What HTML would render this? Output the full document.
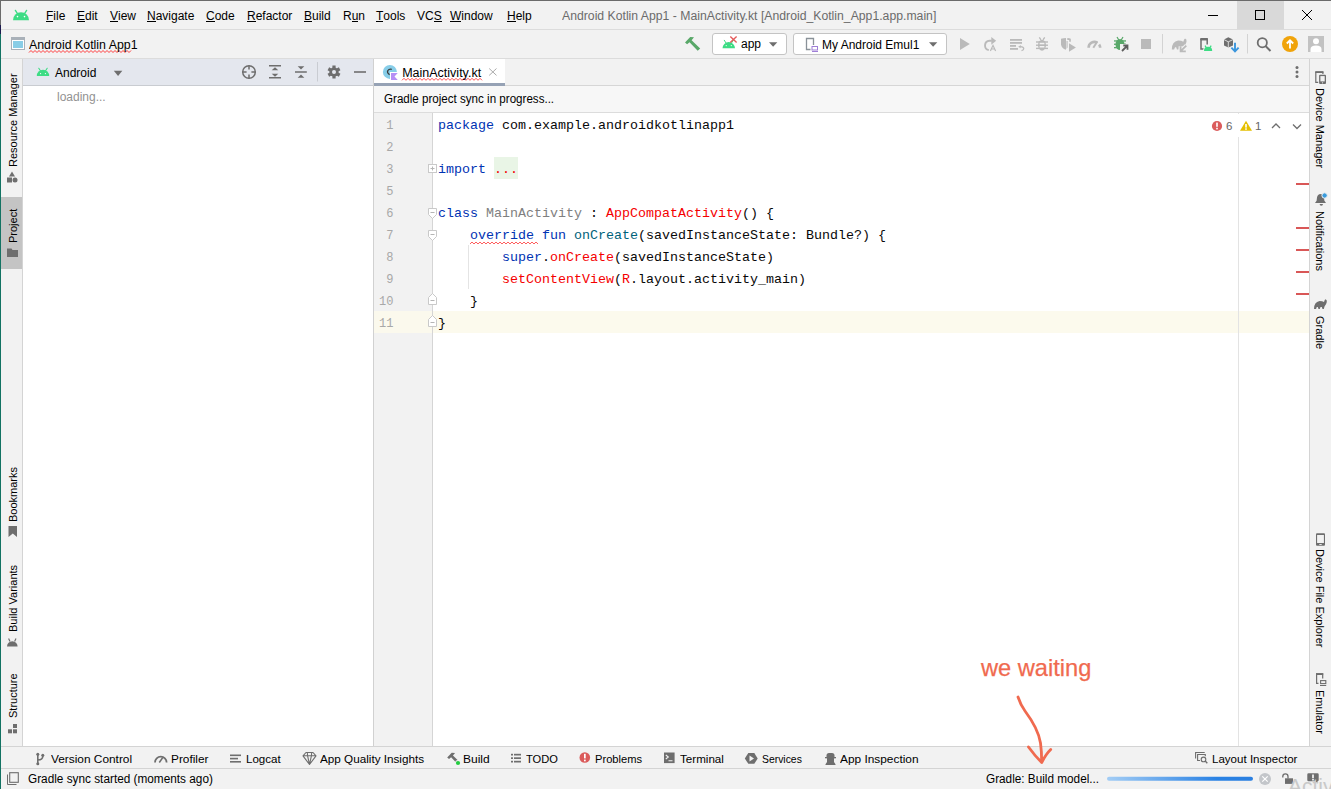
<!DOCTYPE html>
<html><head><meta charset="utf-8">
<style>
*{margin:0;padding:0;box-sizing:border-box}
html,body{width:1331px;height:789px;overflow:hidden;background:#f2f2f2;font-family:"Liberation Sans",sans-serif;font-size:12px;color:#000}
.a{position:absolute}
.t{position:absolute;white-space:nowrap;line-height:1}
.mono{font-family:"Liberation Mono",monospace}
.u{text-decoration:underline;text-underline-offset:2px}
svg{position:absolute;overflow:visible}
.mn{position:relative}.mn::after{content:"";position:absolute;left:0;right:0;top:12px;height:1px;background:#000}
.k{color:#0033b3}.r{color:#f50000}.g{color:#808080}.f{color:#00627a}
.vl{position:absolute;white-space:nowrap;line-height:1;transform-origin:0 0}
</style></head><body>
<!-- window border -->
<div class="a" style="left:0;top:0;width:1331px;height:1px;background:#6b6b6b"></div>
<div class="a" style="left:0;top:0;width:1px;height:25px;background:#6b6b6b"></div>
<div class="a" style="left:0;top:25px;width:1px;height:9px;background:#1c1a4e"></div>
<div class="a" style="left:0;top:34px;width:1px;height:755px;background:#137363"></div>

<!-- TITLE BAR -->
<div id="title" class="a" style="left:1px;top:1px;width:1330px;height:28px;background:#f2f2f2"></div>
<svg style="left:0;top:0" width="40" height="30"><path d="M13 20.2A8 8 0 0 1 29 20.2Z" fill="#3ddc84"/><path d="M15.4 10.4L17.6 13.8M26.6 10.4L24.4 13.8" stroke="#3ddc84" stroke-width="1.4" stroke-linecap="round"/><circle cx="17.5" cy="16.6" r="0.8" fill="#fff"/><circle cx="24.5" cy="16.6" r="0.8" fill="#fff"/></svg>
<div class="t" style="left:46px;top:10px"><span class="mn">F</span>ile</div>
<div class="t" style="left:77px;top:10px"><span class="mn">E</span>dit</div>
<div class="t" style="left:110px;top:10px"><span class="mn">V</span>iew</div>
<div class="t" style="left:147px;top:10px"><span class="mn">N</span>avigate</div>
<div class="t" style="left:206px;top:10px"><span class="mn">C</span>ode</div>
<div class="t" style="left:247px;top:10px"><span class="mn">R</span>efactor</div>
<div class="t" style="left:304px;top:10px"><span class="mn">B</span>uild</div>
<div class="t" style="left:343px;top:10px">R<span class="mn">u</span>n</div>
<div class="t" style="left:376px;top:10px"><span class="mn">T</span>ools</div>
<div class="t" style="left:417px;top:10px">VC<span class="mn">S</span></div>
<div class="t" style="left:450px;top:10px"><span class="mn">W</span>indow</div>
<div class="t" style="left:507px;top:10px"><span class="mn">H</span>elp</div>
<div class="t" style="left:562px;top:10px;color:#6b6b6b;transform:scaleX(1.019);transform-origin:0 0">Android Kotlin App1 - MainActivity.kt [Android_Kotlin_App1.app.main]</div>
<div class="a" style="left:1237px;top:1px;width:47px;height:28px;background:#d9d9d9"></div>
<svg style="left:0;top:0" width="1331" height="30"><path d="M1208 15.5H1218" stroke="#000" stroke-width="1"/><rect x="1255.5" y="10.5" width="9" height="9" fill="none" stroke="#000" stroke-width="1"/><path d="M1302 10L1312 20M1312 10L1302 20" stroke="#000" stroke-width="1"/></svg>
<div class="a" style="left:1px;top:29px;width:1330px;height:1px;background:#dcdcdc"></div>

<!-- NAVBAR -->
<svg style="left:0;top:30px" width="200" height="28"><rect x="11" y="7" width="14" height="13" fill="#a9b1b9"/><rect x="12" y="10" width="12" height="9" fill="#fff"/><rect x="13" y="11" width="10" height="7" fill="#89cde6"/>
<path d="M29 22.5l2-2 2 2 2-2 2 2 2-2 2 2 2-2 2 2 2-2 2 2 2-2 2 2 2-2 2 2 2-2 2 2 2-2 2 2 2-2 2 2 2-2 2 2 2-2 2 2 2-2 2 2 2-2 2 2 2-2 2 2 2-2 2 2 2-2 2 2 2-2 2 2 2-2 2 2 2-2 2 2 2-2 2 2 2-2 2 2 2-2 2 2 2-2 2 2 2-2 2 2 2-2" fill="none" stroke="#ff3b3b" stroke-width="1"/></svg>
<div class="t" style="left:29px;top:39px;transform:scaleX(1.03);transform-origin:0 0">Android Kotlin App1</div>
<svg style="left:0;top:0" width="1331" height="58">
<path d="M690.2 37L694 37.2L691.6 40.2L700.2 48.4L697.7 50.8L689.5 42.2L687.1 44.2L685 42.4Z" fill="#59a869"/>
</svg>
<div class="a" style="left:712px;top:33px;width:75px;height:22px;border:1px solid #c4c4c4;border-radius:3px;background:#fff"></div>
<svg style="left:0;top:0" width="1331" height="58">
<path d="M722.5 48.3A6.2 6.2 0 0 1 735 48.3Z" fill="#3ddc84"/><path d="M724.3 40.3L726 43M733.2 40.3L731.5 43" stroke="#3ddc84" stroke-width="1" stroke-linecap="round"/>
<circle cx="726.2" cy="45.6" r="0.6" fill="#fff"/><circle cx="731.3" cy="45.6" r="0.6" fill="#fff"/>
<path d="M730.3 36.6L736.6 42.6M736.6 36.6L730.3 42.6" stroke="#e55b5b" stroke-width="1.4"/>
<path d="M769 42.3H777.3L773.15 46.8Z" fill="#6e6e6e"/>
</svg>
<div class="t" style="left:741px;top:38px">app</div>
<div class="a" style="left:793px;top:33px;width:154px;height:22px;border:1px solid #c4c4c4;border-radius:3px;background:#fff"></div>
<svg style="left:0;top:0" width="1331" height="58">
<path d="M810.5 49.5H806.5V38.5H813.5V45" fill="none" stroke="#8a9299" stroke-width="1.3"/>
<rect x="812" y="46.5" width="5.5" height="3.5" fill="none" stroke="#9f7fd6" stroke-width="1"/><path d="M812 51.5H818" stroke="#9f7fd6" stroke-width="1"/>
<path d="M929 42.3H937.3L933.15 46.8Z" fill="#6e6e6e"/>
</svg>
<div class="t" style="left:822px;top:39px">My Android Emul1</div>
<svg style="left:0;top:0" width="1331" height="58">
<g fill="#bababa" stroke="none">
<path d="M960 38L969.8 44L960 50Z"/>
</g>
<path d="M991.8 40.8H989.5A4.7 4.7 0 0 0 988.8 50.1" fill="none" stroke="#bababa" stroke-width="1.9"/>
<path d="M991.3 37L996.2 40.8L991.3 44.7Z" fill="#bababa"/>
<path d="M990.4 50.9L993 45.3L995.6 50.9M991.4 49H994.6" fill="none" stroke="#bababa" stroke-width="1.2"/>
<g fill="#bababa"><rect x="1010" y="39" width="12" height="1.8"/><rect x="1010" y="42" width="12" height="1.8"/><rect x="1010" y="45" width="6" height="1.8"/><rect x="1010" y="48" width="8" height="1.8"/></g>
<path d="M1019.8 46.6Q1023.5 46.3 1023.8 48.6Q1023.8 50.3 1021.5 50.6" fill="none" stroke="#bababa" stroke-width="1.2"/><path d="M1018.2 46.7L1020.8 45L1020.6 48.2Z" fill="#bababa"/>
<g fill="#bababa"><ellipse cx="1042" cy="45.2" rx="4" ry="5.5"/><rect x="1036" y="41.3" width="12" height="1.4"/><rect x="1036" y="44.5" width="12" height="1.4"/><rect x="1036" y="47.7" width="12" height="1.4"/></g>
<path d="M1039.3 37.3L1041 39.8M1044.7 37.3L1043 39.8" stroke="#bababa" stroke-width="1.3"/>
<rect x="1039.6" y="42.8" width="4.8" height="1.5" fill="#f2f2f2"/><rect x="1039.6" y="46" width="4.8" height="1.5" fill="#f2f2f2"/>
<path d="M1061 38.8Q1063.5 38 1066 38V49.8Q1061.5 48.5 1061 44.5Z" fill="#bababa"/>
<path d="M1067.3 38.1Q1069.5 38.2 1070.8 38.8V41.7H1069.2V40H1067.3Z" fill="#bababa"/>
<path d="M1066.8 48.5Q1067.8 48 1067.6 46.5V41H1066.5V49Z" fill="#bababa"/>
<path d="M1069 43.2L1075.9 47.45L1069 51.7Z" fill="#bababa"/>
<path d="M1088.6 47.7A5.8 5.8 0 0 1 1097.3 42.7M1099.15 44.4A5.8 5.8 0 0 1 1100.2 47.7" fill="none" stroke="#bababa" stroke-width="2.6"/>
<path d="M1093.3 47.7L1097.3 41.5" stroke="#bababa" stroke-width="2"/>
<g fill="#59a869"><ellipse cx="1120" cy="44.5" rx="4.5" ry="5.6"/><rect x="1114" y="40.3" width="12" height="1.3"/><rect x="1114" y="43.6" width="12" height="1.3"/><rect x="1114" y="47" width="12" height="1.3"/></g>
<path d="M1117 37L1118.8 40M1123 37L1121.2 40" stroke="#59a869" stroke-width="1.2"/>
<path d="M1120 44H1130V53H1120Z" fill="#f2f2f2"/>
<path d="M1122 51L1127 46M1123.3 45.5H1127.5V49.7" fill="none" stroke="#5e5e5e" stroke-width="1.8"/>
<rect x="1141" y="39" width="10" height="10" fill="#bababa"/>
<rect x="1162" y="34" width="1" height="19.5" fill="#d3d3d3"/>
<g transform="translate(1171.8 49.4) scale(1.15 1.1) translate(-1314 -309)"><path d="M1314 309Q1314 302 1319.5 301Q1322.5 301 1324 302Q1324.7 299.5 1325.5 299.2Q1327.2 299.8 1326.8 302Q1326.3 304.5 1324.5 306.5L1323.8 309H1322.5L1321.8 307H1320.5L1319.8 309H1318.5L1317.8 307H1316.8L1316 309Z" fill="#bababa"/></g>
<path d="M1186.3 45.6L1181.2 50.7M1180.6 46.2V51.4H1185.8" fill="none" stroke="#f2f2f2" stroke-width="4"/>
<path d="M1186.3 45.6L1181.2 50.7M1180.6 46.2V51.4H1185.8" fill="none" stroke="#bababa" stroke-width="1.8"/>
<path d="M1203.6 49H1201V39.5H1207.2V44.5" fill="none" stroke="#6e6e6e" stroke-width="1.5"/><rect x="1200.2" y="38" width="7.8" height="2.2" rx="0.8" fill="#6e6e6e"/>
<path d="M1203.2 51.9V50.9A4.9 4.9 0 0 1 1213 50.9V51.9Z" fill="#f2f2f2"/>
<path d="M1204 50.9A4.1 4.1 0 0 1 1212.2 50.9Z" fill="#3ddc84"/><path d="M1205 45.6L1206.3 47.6M1211.2 45.6L1209.9 47.6" stroke="#3ddc84" stroke-width="1.2"/>
<path d="M1228.3 37.3L1233 39.6V45.4L1228.3 47.6L1224 45.4V39.6Z" fill="#6e6e6e"/>
<path d="M1224 39.6L1228.3 41.8L1233 39.6M1228.3 41.8V47.6" fill="none" stroke="#f2f2f2" stroke-width="0.8"/>
<path d="M1235 42.8V50.5M1231.4 47.6L1235 51.4L1238.6 47.6" fill="none" stroke="#3a96dd" stroke-width="1.9"/>
<rect x="1247" y="34" width="1" height="19.5" fill="#d3d3d3"/>
<circle cx="1262.3" cy="42.7" r="4.6" fill="none" stroke="#6e6e6e" stroke-width="1.8"/>
<path d="M1265.5 46L1270.5 51" stroke="#6e6e6e" stroke-width="2"/>
<circle cx="1290" cy="44" r="8" fill="#f0a30a"/>
<path d="M1290 48.5V40.5M1286.8 43.5L1290 40.3L1293.2 43.5" fill="none" stroke="#fff" stroke-width="1.8"/>
<rect x="1308" y="36" width="16" height="16" fill="#c2c2c2"/>
<circle cx="1316" cy="41.3" r="3" fill="#fff"/><path d="M1310.5 52V49Q1310.5 45.5 1316 45.5Q1321.5 45.5 1321.5 49V52Z" fill="#fff"/>
</svg>
<div class="a" style="left:1px;top:58px;width:1330px;height:1px;background:#dcdcdc"></div>

<!-- LEFT STRIP -->
<div class="a" style="left:1px;top:197px;width:21px;height:72px;background:#c4c4c4"></div>
<div class="vl" style="left:7.5px;top:167px;font-size:11px;transform:rotate(-90deg)">Resource Manager</div>
<div class="vl" style="left:7.5px;top:242.5px;font-size:11px;transform:rotate(-90deg)">Project</div>
<div class="vl" style="left:7.5px;top:522px;font-size:11px;transform:rotate(-90deg)">Bookmarks</div>
<div class="vl" style="left:7.5px;top:632px;font-size:11px;transform:rotate(-90deg)">Build Variants</div>
<div class="vl" style="left:7.5px;top:718px;font-size:11px;transform:rotate(-90deg)">Structure</div>
<svg style="left:0;top:0" width="23" height="789">
<g fill="#6e6e6e">
<path d="M12 171.5L15 176.5H9Z"/><rect x="7" y="177.5" width="5" height="5"/><circle cx="15" cy="180" r="2.5"/>
<path d="M7 248.5H11.5L12.5 250H18V257H7Z"/>
<path d="M8.5 526H17V537L12.8 533.5L8.5 537Z"/>
<path d="M7 646.5A5.3 5.3 0 0 1 17.6 646.5Z"/><path d="M8.6 638.6L10 641.5M16 638.6L14.6 641.5" stroke="#6e6e6e" stroke-width="1.2"/>
<rect x="13" y="724" width="4" height="4"/><rect x="8" y="729.3" width="4" height="4"/><rect x="13" y="729.3" width="4" height="4"/>
</g>
</svg>
<div class="a" style="left:22px;top:59px;width:1px;height:687px;background:#d4d4d4"></div>

<!-- PROJECT PANEL -->
<div class="a" style="left:23px;top:59px;width:350px;height:26px;background:#e4e7ee"></div>
<div class="a" style="left:23px;top:85px;width:350px;height:1px;background:#c9ccd1"></div>
<div class="a" style="left:23px;top:86px;width:350px;height:660px;background:#fff"></div>
<svg style="left:0;top:58px" width="373" height="28">
<path d="M36.8 18A6.2 6.2 0 0 1 49.2 18Z" fill="#3ddc84"/><path d="M38.8 10.3L40.6 13M47.2 10.3L45.4 13" stroke="#3ddc84" stroke-width="1.1" stroke-linecap="round"/>
<circle cx="40.6" cy="15.6" r="0.6" fill="#fff"/><circle cx="45.4" cy="15.6" r="0.6" fill="#fff"/>
<path d="M113.8 12.8H122.3L118.05 17.9Z" fill="#6e6e6e"/>
<g fill="none" stroke="#6e6e6e" stroke-width="1.5">
<circle cx="249" cy="14" r="6.3"/>
<path d="M242.5 14H246.6M251.4 14H255.5M249 7.5V11.6M249 16.4V20.5"/>
<path d="M269 7.8H281M269 19.8H281"/>
<path d="M295 14H306.8"/>
</g>
<g fill="#6e6e6e">
<path d="M271.7 12.3L275 9.3L278.3 12.3Z"/><path d="M271.7 15.7L275 18.7L278.3 15.7Z"/>
<path d="M297.7 8.2H304.3L301 11.6Z"/><path d="M297.7 19.8H304.3L301 16.4Z"/>
<rect x="317" y="4" width="1" height="19.5" fill="#c9ccd2"/>
<path d="M354 13.2H366V14.8H354Z"/>
</g>
<g transform="translate(334 14)" fill="#6e6e6e">
<circle r="4.6"/>
<rect x="-1.6" y="-6.5" width="3.2" height="13" />
<rect x="-1.6" y="-6.5" width="3.2" height="13" transform="rotate(60)"/>
<rect x="-1.6" y="-6.5" width="3.2" height="13" transform="rotate(120)"/>
<circle r="2" fill="#e4e7ee"/>
</g>
</svg>
<div class="t" style="left:55px;top:66.5px">Android</div>
<div class="t" style="left:57px;top:91px;color:#929292">loading...</div>
<div class="a" style="left:373px;top:59px;width:1px;height:687px;background:#d1d1d1"></div>

<!-- EDITOR -->
<div class="a" style="left:374px;top:59px;width:935px;height:26px;background:#f2f2f2"></div>
<div class="a" style="left:374px;top:85px;width:935px;height:1px;background:#d6d6d6"></div>
<div class="a" style="left:374px;top:86px;width:935px;height:26px;background:#f7f7f7"></div>
<div class="a" style="left:374px;top:112px;width:935px;height:1px;background:#dcdcdc"></div>
<div class="a" style="left:374px;top:113px;width:58px;height:633px;background:#f2f2f2"></div>
<div class="a" style="left:432px;top:113px;width:1px;height:633px;background:#d5d5d5"></div>
<div class="a" style="left:433px;top:113px;width:876px;height:633px;background:#fff"></div>
<!-- tab -->
<div class="a" style="left:374px;top:59px;width:131px;height:24px;background:#fff"></div>
<div class="a" style="left:374px;top:83px;width:131px;height:3px;background:#96a2b5"></div>
<svg style="left:0;top:58px" width="520" height="28">
<circle cx="389.9" cy="13.9" r="7" fill="#87cde8"/>
<path d="M391.8 11.3Q389 10.7 387.8 12.6Q386.6 14.6 389.6 16.7" fill="none" stroke="#3c3c3c" stroke-width="1.2"/>
<rect x="390" y="14" width="8" height="9" fill="#fff"/>
<path d="M391 15H397.8L394.5 18.5L397.8 22H391Z" fill="#b68ff5"/>
<path d="M489.2 10.5L496.5 17.4M496.5 10.5L489.2 17.4" stroke="#ababab" stroke-width="1"/>
<path d="M402 22.3l2-2 2 2 l2-2 2 2 l2-2 2 2 l2-2 2 2 l2-2 2 2 l2-2 2 2 l2-2 2 2 l2-2 2 2 l2-2 2 2 l2-2 2 2 l2-2 2 2 l2-2 2 2 l2-2 2 2 l2-2 2 2 l2-2 2 2 l2-2 2 2 l2-2 2 2 l2-2 2 2 l2-2 2 2 l2-2 2 2" fill="none" stroke="#ff3b3b" stroke-width="0.9"/>
</svg>
<div class="t" style="left:402.2px;top:66.5px;font-size:12.5px">MainActivity.kt</div>
<svg style="left:1290px;top:62px" width="14" height="22"><circle cx="7" cy="5.5" r="1.5" fill="#6e6e6e"/><circle cx="7" cy="10" r="1.5" fill="#6e6e6e"/><circle cx="7" cy="14.5" r="1.5" fill="#6e6e6e"/></svg>
<div class="t" style="left:384.4px;top:93.4px;transform:scaleX(0.966);transform-origin:0 0">Gradle project sync in progress...</div>
<!-- current line -->
<div class="a" style="left:374px;top:311px;width:58px;height:22px;background:#fbf9ed"></div>
<div class="a" style="left:433px;top:311px;width:876px;height:22px;background:#fcfaed"></div>
<!-- right margin -->
<div class="a" style="left:1238px;top:113px;width:1px;height:633px;background:#e3e3e3"></div>
<div class="a" style="left:1205px;top:114px;width:104px;height:23px;background:#fff"></div>
<!-- indicators -->
<svg style="left:1200px;top:112px" width="110" height="30">
<circle cx="17" cy="14" r="5.1" fill="#db5c5c"/><rect x="16.2" y="10.6" width="1.6" height="4.2" fill="#fff"/><rect x="16.2" y="15.8" width="1.6" height="1.6" fill="#fff"/>
<path d="M46 8.7L52 18.8H40Z" fill="#e5bf00"/><rect x="45.2" y="12" width="1.6" height="3.6" fill="#fff"/><rect x="45.2" y="16.3" width="1.6" height="1.5" fill="#fff"/>
<path d="M72 16L76 12L80 16M93 12.5L97 16.5L101 12.5" fill="none" stroke="#6e6e6e" stroke-width="1.3"/>
</svg>
<div class="t" style="left:1226px;top:121px;font-size:11.5px;color:#666">6</div>
<div class="t" style="left:1255px;top:121px;font-size:11.5px;color:#666">1</div>
<!-- error stripes -->
<div class="a" style="left:1296px;top:183px;width:13px;height:2px;background:#d95757"></div>
<div class="a" style="left:1296px;top:227px;width:13px;height:2px;background:#d95757"></div>
<div class="a" style="left:1296px;top:249px;width:13px;height:2px;background:#d95757"></div>
<div class="a" style="left:1296px;top:271px;width:13px;height:2px;background:#d95757"></div>
<div class="a" style="left:1296px;top:293px;width:13px;height:2px;background:#d95757"></div>
<!-- gutter numbers -->
<div class="mono" style="position:absolute;left:374px;top:115px;width:19.5px;font-size:12px;line-height:22px;color:#a8a8a8;text-align:right;white-space:pre">1
2
3
5
6
7
8
9
10
11</div>
<!-- folds -->
<svg style="left:0;top:0" width="1331" height="789">
<g fill="#fff" stroke="#c9c9c9" stroke-width="1">
<rect x="428.5" y="164.5" width="8" height="8"/>
<path d="M428.5 208.5H436.5V214.5L432.5 218.5L428.5 214.5Z"/>
<path d="M428.5 230.5H436.5V236.5L432.5 240.5L428.5 236.5Z"/>
<path d="M428.5 304.5H436.5V297.5L432.5 293.5L428.5 297.5Z"/>
<path d="M428.5 326.5H436.5V319.5L432.5 315.5L428.5 319.5Z"/>
</g>
<path d="M430.5 168.5H434.5M432.5 166.5V170.5M430.5 212.5H434.5M430.5 234.5H434.5M430.5 300.5H434.5M430.5 322.5H434.5" stroke="#b5b5b5" stroke-width="1"/>
<rect x="468" y="245" width="1" height="44" fill="#e4e4e4"/>
<rect x="494" y="157" width="24" height="22" fill="#e9f5e6"/>
<path d="M470 244l2-2 2 2 2-2 2 2 2-2 2 2 2-2 2 2 2-2 2 2 2-2 2 2 2-2 2 2 2-2 2 2 2-2 2 2 2-2 2 2 2-2 2 2 2-2 2 2 2-2 2 2 2-2 2 2 2-2 2 2 2-2 2 2 2-2 2 2" fill="none" stroke="#ff4d4d" stroke-width="0.9"/>
</svg>
<!-- code -->
<div class="mono" style="position:absolute;left:438px;top:115px;font-size:13.333px;line-height:22px;color:#080808;white-space:pre"><span class="k">package</span> com.example.androidkotlinapp1

<span class="k">import</span> <span class="r">...</span>

<span class="k">class</span> <span class="g">MainActivity</span> : <span class="r">AppCompatActivity</span>() {
    <span class="k">override</span> <span class="k">fun</span> <span class="f">onCreate</span>(savedInstanceState: Bundle?) {
        <span class="k">super</span>.<span class="r">onCreate</span>(savedInstanceState)
        <span class="r">setContentView</span>(<span class="r">R</span>.layout.activity_main)
    }
}</div>

<!-- RIGHT STRIP -->
<div class="vl" style="left:1325px;top:88px;font-size:11px;transform:rotate(90deg)">Device Manager</div>
<div class="vl" style="left:1325px;top:210.5px;font-size:11px;transform:rotate(90deg)">Notifications</div>
<div class="vl" style="left:1325px;top:315.5px;font-size:11px;transform:rotate(90deg)">Gradle</div>
<div class="vl" style="left:1325px;top:548.5px;font-size:11px;transform:rotate(90deg)">Device File Explorer</div>
<div class="vl" style="left:1325px;top:690px;font-size:11px;transform:rotate(90deg)">Emulator</div>
<svg style="left:0;top:0" width="1331" height="789">
<g fill="none" stroke="#6e6e6e" stroke-width="1.2">



</g>
<path d="M1315 203L1316.6 200.8L1317 197.5Q1317.6 194 1320.5 194Q1323.4 194 1324 197.5L1324.4 200.8L1326 203Z" fill="#6e6e6e"/><path d="M1319.6 204H1323A1.7 1.7 0 0 1 1319.6 204Z" fill="#6e6e6e"/><circle cx="1324.6" cy="195.5" r="2.7" fill="#3a9bdc" stroke="#f2f2f2" stroke-width="1"/>
<path d="M1314 309Q1314 302 1319.5 301Q1322.5 301 1324 302Q1324.7 299.5 1325.5 299.2Q1327.2 299.8 1326.8 302Q1326.3 304.5 1324.5 306.5L1323.8 309H1322.5L1321.8 307H1320.5L1319.8 309H1318.5L1317.8 307H1316.8L1316 309Z" fill="#6e6e6e"/>
<rect x="1316" y="533.2" width="9" height="12.6" rx="1" fill="#6e6e6e"/><rect x="1317.1" y="535" width="6.8" height="8" fill="#f2f2f2"/><rect x="1319.3" y="544" width="2.4" height="0.9" fill="#f2f2f2"/>
<path d="M1318.5 683.3H1316.6V673.9H1322.7V678.5" fill="none" stroke="#6e6e6e" stroke-width="1.2"/><rect x="1316" y="673.2" width="7.2" height="1.8" fill="#6e6e6e"/><rect x="1320.6" y="680.6" width="5.2" height="3" fill="none" stroke="#6e6e6e" stroke-width="1.1"/><rect x="1320" y="685" width="6.2" height="1" fill="#6e6e6e"/>
<path d="M1318.7 82.4H1315.8V72H1322.9V74.2" fill="none" stroke="#6e6e6e" stroke-width="1.2"/><rect x="1315.2" y="71.3" width="8.3" height="1.6" rx="0.6" fill="#6e6e6e"/>
<rect x="1318.3" y="73.9" width="8.5" height="10.9" rx="1.4" fill="#f2f2f2"/><rect x="1319.1" y="74.7" width="6.9" height="9.3" rx="1" fill="#6e6e6e"/><rect x="1320.4" y="76.1" width="4.3" height="5.3" fill="#f2f2f2"/><circle cx="1322.55" cy="82.8" r="0.6" fill="#f2f2f2"/>
</svg>
<div class="a" style="left:1309px;top:59px;width:1px;height:687px;background:#d4d4d4"></div>

<!-- BOTTOM -->
<div class="a" style="left:1px;top:746px;width:1330px;height:1px;background:#d4d4d4"></div>
<div class="a" style="left:1px;top:768px;width:1330px;height:1px;background:#d4d4d4"></div>
<!-- BOTTOM TOOLBAR -->
<div class="t" style="left:50.7px;top:753.8px;font-size:11px;transform:scaleX(1.078);transform-origin:0 0">Version Control</div>
<div class="t" style="left:170.9px;top:753.8px;font-size:11px;transform:scaleX(1.076);transform-origin:0 0">Profiler</div>
<div class="t" style="left:245.7px;top:753.8px;font-size:11px;transform:scaleX(1.051);transform-origin:0 0">Logcat</div>
<div class="t" style="left:319.9px;top:753.8px;font-size:11px;transform:scaleX(1.064);transform-origin:0 0">App Quality Insights</div>
<div class="t" style="left:463.4px;top:753.8px;font-size:11px;transform:scaleX(1.092);transform-origin:0 0">Build</div>
<div class="t" style="left:525.7px;top:753.8px;font-size:11px;transform:scaleX(1.010);transform-origin:0 0">TODO</div>
<div class="t" style="left:594.7px;top:753.8px;font-size:11px;transform:scaleX(1.014);transform-origin:0 0">Problems</div>
<div class="t" style="left:679.9px;top:753.8px;font-size:11px;transform:scaleX(1.056);transform-origin:0 0">Terminal</div>
<div class="t" style="left:761.9px;top:753.8px;font-size:11px;transform:scaleX(0.944);transform-origin:0 0">Services</div>
<div class="t" style="left:840.4px;top:753.8px;font-size:11px;transform:scaleX(1.079);transform-origin:0 0">App Inspection</div>
<div class="t" style="left:1212.0px;top:753.8px;font-size:11px;transform:scaleX(1.050);transform-origin:0 0">Layout Inspector</div>
<svg style="left:0;top:746px" width="1331" height="24">
<g fill="none" stroke="#6e6e6e" stroke-width="1.6">
<path d="M37.8 8.5V17.5M37.8 14Q42.8 14 42.8 10"/>
</g>
<g fill="#6e6e6e"><circle cx="37.8" cy="8.3" r="1.5"/><circle cx="37.8" cy="17.8" r="1.5"/><circle cx="42.8" cy="9.2" r="1.5"/></g>
<path d="M155 16.5A5.8 5.8 0 0 1 166.6 16.5" fill="none" stroke="#6e6e6e" stroke-width="1.8"/><path d="M159.3 16.5L162.8 11.5" stroke="#6e6e6e" stroke-width="1.5"/>
<g fill="#6e6e6e"><rect x="230" y="8.5" width="11" height="1.6"/><rect x="230" y="11.8" width="8" height="1.6"/><rect x="230" y="15" width="11" height="1.6"/></g>
<path d="M306 6.5H313L316 9.8L309.5 18.5L303 9.8ZM303 9.8H316M307.3 6.5L307.6 9.8L309.5 18.5L311.4 9.8L311.7 6.5" fill="none" stroke="#6e6e6e" stroke-width="1.1" stroke-linejoin="round"/>
<g transform="translate(447.2 6.8) scale(0.87) translate(-685 -37)"><path d="M690.2 37L694 37.2L691.6 40.2L700.2 48.4L697.7 50.8L689.5 42.2L687.1 44.2L685 42.4Z" fill="#6e6e6e"/></g><circle cx="458" cy="17" r="2.9" fill="#f2f2f2"/><circle cx="458" cy="17" r="2.1" fill="#22cc3f"/>
<g fill="#6e6e6e"><rect x="511" y="7.8" width="2" height="1.7"/><rect x="514" y="7.8" width="7" height="1.7"/><rect x="511" y="11.3" width="2" height="1.7"/><rect x="514" y="11.3" width="7" height="1.7"/><rect x="511" y="14.8" width="2" height="1.7"/><rect x="514" y="14.8" width="7" height="1.7"/></g>
<circle cx="584.8" cy="11.5" r="5.3" fill="#db5c5c"/><rect x="584" y="7.8" width="1.7" height="4.6" fill="#fff"/><rect x="584" y="13.6" width="1.7" height="1.7" fill="#fff"/>
<rect x="664" y="6.5" width="10.6" height="10.6" fill="#6e6e6e"/><path d="M665.8 9L668.3 11L665.8 13M668.5 14.8H672.5" fill="none" stroke="#f2f2f2" stroke-width="1.1"/>
<path d="M748.3 7H754.3L757.7 12.4L754.3 17.8H748.3L744.8 12.4Z" fill="#6e6e6e"/><path d="M749.5 9.4L754 12.4L749.5 15.4Z" fill="#f2f2f2"/>
<rect x="826.5" y="7" width="8" height="6.5" rx="2.5" fill="#6e6e6e"/><rect x="825" y="11" width="11" height="1.3" fill="#6e6e6e"/><path d="M827 13H834V16L835.5 18.3V19H825.5V18.3L827 16Z" fill="#6e6e6e"/>
<g fill="none" stroke="#6e6e6e" stroke-width="1.1"><path d="M1195.6 12.6V6.5H1204.7"/><path d="M1205.3 10.3V8.5H1197.6V14.5H1200"/><circle cx="1203.5" cy="13.4" r="2.3"/><path d="M1205.2 15.1L1207.3 17.2" stroke-width="1.4"/></g>
</svg>
<!-- STATUS BAR -->
<svg style="left:0;top:769px" width="1331" height="20">
<path d="M7.5 5.5V15.5H16.5" fill="none" stroke="#6e6e6e" stroke-width="1"/><rect x="9.7" y="3.7" width="8.6" height="9.6" fill="none" stroke="#6e6e6e" stroke-width="1.1"/>
<defs><linearGradient id="pg" x1="0" x2="1"><stop offset="0" stop-color="#a3cdf5"/><stop offset="0.75" stop-color="#2a82e4"/><stop offset="1" stop-color="#2a7fe0"/></linearGradient></defs>
<rect x="1107" y="7.8" width="146" height="4" rx="2" fill="url(#pg)"/>
<circle cx="1265" cy="10" r="6" fill="#c3c6ca"/><path d="M1262.3 7.3L1267.7 12.7M1267.7 7.3L1262.3 12.7" stroke="#fff" stroke-width="1.2"/>
<path d="M1282.8 8.5V7.5A2.6 2.6 0 0 1 1288 7.5V9.5" fill="none" stroke="#6e6e6e" stroke-width="1.3"/><rect x="1285" y="9.3" width="8" height="5.6" fill="#6e6e6e"/>
<path d="M1308.5 4.3H1317.5Q1318.7 4.3 1318.7 5.5V11Q1318.7 12.2 1317.5 12.2V14.5L1315.5 12.2H1308.5Q1307.3 12.2 1307.3 11V5.5Q1307.3 4.3 1308.5 4.3Z" fill="#6e6e6e"/><rect x="1312.2" y="5.5" width="1.6" height="3.8" fill="#fff"/><rect x="1312.2" y="10" width="1.6" height="1.5" fill="#fff"/>
</svg>
<div class="t" style="left:28.3px;top:772.7px;transform:scaleX(0.983);transform-origin:0 0">Gradle sync started (moments ago)</div>
<div class="t" style="left:985.8px;top:772.7px;transform:scaleX(0.98);transform-origin:0 0">Gradle: Build model...</div>
<div class="t" style="left:1288px;top:775px;font-size:21px;color:#c9c9c9;line-height:1">Activ</div>


<!-- ANNOTATION -->
<div class="t" style="left:980.6px;top:656px;font-size:24px;color:#f06a4f;-webkit-text-stroke:0.25px #f06a4f;transform:scaleX(0.985);transform-origin:0 0">we waiting</div>
<svg style="left:0;top:0" width="1331" height="789"><path d="M1018 697C1020 703 1022 707 1025 711C1034 723 1039 733 1040.5 743C1041.5 750 1041.7 756 1041.7 762.5M1028.5 747Q1035 756 1041.7 762.5Q1046 754 1050.7 749.5" fill="none" stroke="#f06a4f" stroke-width="2.8" stroke-linecap="round" stroke-linejoin="round"/></svg>
</body></html>
